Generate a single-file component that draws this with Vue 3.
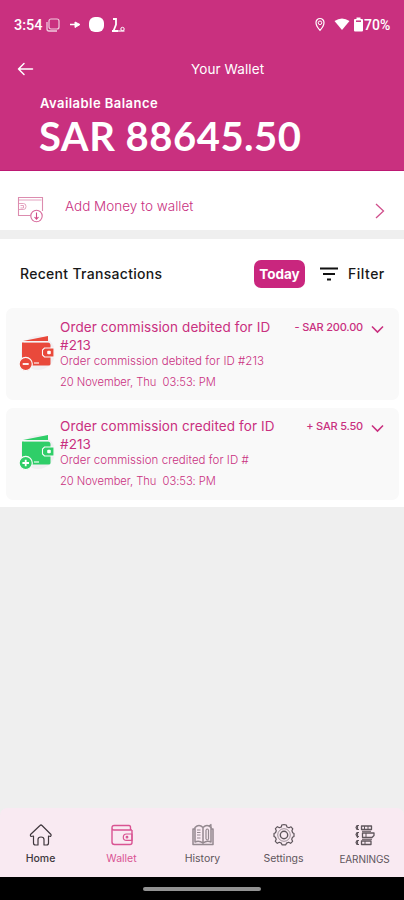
<script setup>
const transactions = [
  { id: 1, kind: 'debit', title: 'Order commission debited for ID #213', note: 'Order commission debited for ID #213', date: '20 November, Thu\u00a0 03:53: PM', amount: '- SAR 200.00' },
  { id: 2, kind: 'credit', title: 'Order commission credited for ID #213', note: 'Order commission credited for ID #', date: '20 November, Thu\u00a0 03:53: PM', amount: '+ SAR 5.50' },
]
const tabs = [
  { name: 'Home', icon: 'home' },
  { name: 'Wallet', icon: 'wallet' },
  { name: 'History', icon: 'history' },
  { name: 'Settings', icon: 'settings' },
  { name: 'EARNINGS', icon: 'earnings' },
]
</script>

<template>
  <div class="screen">
    <header class="hero">
      <div class="status">
        <span class="clock">3:54</span>
        <svg class="status-left" width="82" height="18" viewBox="0 0 82 18" fill="none" stroke="#fff">
          <g opacity=".75"><rect x="4" y="3" width="10" height="10" rx="2" stroke-width="1.2" /><path d="M2 6v7q0 2 2 2h8" stroke-width="1.3" /></g>
          <path d="M25 8.500h7" stroke-width="1.5" /><path d="M30 6l5 2.500-5 3z" fill="#fff" stroke-width="1" />
          <rect x="44" y="1" width="15" height="15" rx="6" fill="#fff" stroke="none" />
          <path d="M68 3h3v5.500L68.500 15M67 15h6" stroke-width="1.800" /><path d="M73 15h6.500" stroke-width="1.200" /><circle cx="77.500" cy="13" r="1.700" />
        </svg>
        <svg class="status-right" width="49" height="18" viewBox="0 0 49 18">
          <path d="M5 2.500a4 4 0 0 0-4 4.200C1 9.800 5 14.300 5 14.300s4-4.500 4-7.600A4 4 0 0 0 5 2.500z" fill="none" stroke="#fff" stroke-width="1.200" /><circle cx="5" cy="6.800" r="1.800" fill="none" stroke="#fff" />
          <path d="M19.500 5q7.500-5 15 0L27 14z" fill="#fff" />
          <path d="M41.500 1.500h4v1.500h1.500a1 1 0 0 1 1 1v10.500a1 1 0 0 1-1 1h-7a1 1 0 0 1-1-1V4a1 1 0 0 1 1-1h1.500z" fill="#fff" /><path d="M41 5.200h5" stroke="#c9307f" stroke-width="1.500" />
        </svg>
        <span class="battery">70%</span>
      </div>
      <div class="titlebar">
        <svg width="18" height="14" viewBox="0 0 18 14" fill="none" stroke="#fff" stroke-width="1.500" stroke-linecap="round" stroke-linejoin="round"><path d="M15.500 7H1.500M7 1.500L1.500 7 7 12.500" /></svg>
        <h1>Your Wallet</h1>
      </div>
      <p class="balance-label">Available Balance</p>
      <p class="balance">SAR 88645.50</p>
    </header>

    <section class="add-money">
      <svg width="28" height="28" viewBox="0 0 28 28" fill="none" stroke="#dc8caf" stroke-width="1.100">
        <path d="M13.500 19.500H1.500V1.500H25.500V15" /><path d="M1.500 4h23M1.500 7.500h5q2.500 0 2.500 3t-2.500 3h-5M3.500 9.500h3v2.500h-3" stroke-width=".8" />
        <circle cx="19.500" cy="20" r="5.700" stroke="#d86a9c" /><path d="M19.500 16.500v6.500M17.500 21l2 2.200 2-2.200" stroke="#d04a88" />
      </svg>
      <span class="add-label">Add Money to wallet</span>
      <svg class="chevron" width="10" height="16" viewBox="0 0 10 16" fill="none" stroke="#d04f8c" stroke-width="1.300"><path d="M1 1l7.500 7L1 15" /></svg>
    </section>

    <section class="recent">
      <div class="recent-head">
        <h2>Recent Transactions</h2>
        <button class="today">Today</button>
        <svg width="18" height="14" viewBox="0 0 18 14" stroke="#111" stroke-width="1.800"><path d="M0 1.500h18M3 7h12M7 12.500h4" /></svg>
        <span class="filter">Filter</span>
      </div>

      <article v-for="item in transactions" :key="item.id" class="card" :class="item.kind">
        <svg class="purse" width="36" height="40" viewBox="0 0 36 40">
          <circle cx="19" cy="20" r="17" fill="#f1eff2" />
          <path d="M4 8L29 3v5z" class="solid" />
          <path d="M3 9.500h25.500q3 0 3 3V31q0 1.500-2 1.500H3z" class="solid" />
          <path d="M5 8.800h24" stroke="#fafafa" stroke-width=".8" />
          <path d="M25.500 15h9.500v9h-9.500l-2-2v-5z" class="solid" stroke="#fafafa" stroke-width="1.100" />
          <rect x="28.200" y="17.700" width="3.600" height="3.600" rx="1" fill="#fff" />
          <path d="M15 30h5" stroke="#fff" stroke-width="1.100" />
          <circle cx="6.700" cy="31" r="6.600" class="solid" stroke="#fafafa" stroke-width="1.200" />
          <path :d="item.kind === 'credit' ? 'M3.400 31h6.600M6.700 27.700v6.600' : 'M3.700 31h6'" stroke="#fff" stroke-width="1.800" />
        </svg>
        <div class="details">
          <h3>{{ item.title }}</h3>
          <p class="note">{{ item.note }}</p>
          <p class="date">{{ item.date }}</p>
        </div>
        <span class="amount">{{ item.amount }}</span>
        <svg class="down" width="13" height="9" viewBox="0 0 13 9" fill="none" stroke="#c9307f" stroke-width="1.600"><path d="M1 1.500l5.500 5.500L12 1.500" /></svg>
      </article>
    </section>

    <nav class="tabs">
      <div v-for="tab in tabs" :key="tab.name" class="tab" :class="tab.icon">
        <svg width="24" height="24" viewBox="0 0 24 24" fill="none" stroke="currentColor" stroke-width="1.200" stroke-linejoin="round">
          <template v-if="tab.icon === 'home'">
            <path d="M4.500 13v7q0 2 2 2H9v-5.500q0-2.500 3-2.500t3 2.500V22h2.500q2 0 2-2v-7l2 .5q1-1 .5-2L13 2.500q-1-1-2 0L1.500 11.500q-.5 1 .5 2z" />
          </template>
          <template v-else-if="tab.icon === 'wallet'">
            <path d="M22 7H4Q2 7 2 4.800 2 2.500 4.300 2.500H19q1.500 0 1.500 2V7M2 5v14q0 2.500 2.500 2.500H20q2 0 2-2V7" stroke-width="1.400" /><path d="M22 11h-5.500a3.200 3.200 0 0 0 0 6.400H22z" /><circle cx="17" cy="14.200" r=".8" />
          </template>
          <template v-else-if="tab.icon === 'history'">
            <path d="M4 6H2v15.500h20V6h-2M4 19V4.500q4-4 8 0 4-4 8 0V19q-4-2-8 1-4-3-8-1zM12 4v16" stroke-width="1.500" /><path d="M6 7h3.500M6 9.500h3.500M6 12h3.500M6 15h3.500M15 7v9M17.500 7v9M15 7q1.300-2 2.500 0M15 16q1.300 2 2.500 0M18 3l2-1.500V5" />
          </template>
          <template v-else-if="tab.icon === 'settings'">
            <path d="M9.700 2q2.300-.9 4.600 0l.7 2 2 .8 2-1 1.800 2-.9 2 .8 2L22 10.500v3l-1.500.8-.8 2 .9 2-2 2-2-1-2 .8-.8 1.700H10l-.7-1.700-2-.8-2 1-2-2 .9-2-.8-2L2 13.500v-3l1.500-.8.8-2-.9-2 2-2 2 1 2-.8z" /><circle cx="12" cy="12" r="6.300" stroke-width=".6" /><circle cx="12" cy="12" r="3.700" stroke-width="1.400" />
          </template>
          <template v-else>
            <path d="M8.500 3h10v3.500h-10zM9.500 10h11.500v2.500l-2 2H9.500zM8.500 18h9.500v3.500H8.500z" stroke-width="1.300" /><path d="M11.500 3v3M15 3v3M13 10v4M12 18v3M9 8.300h9M9 16.300h10" stroke-width="1" /><path d="M6 2.500H4L3 4.500l1 2h2M6 9.500H4l-1 2 1 2h2M6 17.500H4l-1 2 1 2h2M4.500 3v4M4.500 10v5M4.500 18v3" stroke-width="1.200" />
          </template>
        </svg>
        <span>{{ tab.name }}</span>
      </div>
    </nav>
    <div class="gesture"><i></i></div>
  </div>
</template>

<style>
body { margin: 0; }
</style>

<style scoped>
.screen { width: 404px; height: 900px; display: flex; flex-direction: column; background: #efefef; font-family: Inter, "Open Sans", sans-serif; color: #c9307f; overflow: hidden; }
h1, h2, h3, p { margin: 0; }
svg { flex: none; display: block; }
span, p, h1, h2 { white-space: nowrap; }
.hero { box-sizing: border-box; height: 171px; flex: none; background: #c9307f; border-bottom: 1px solid #bd1873; color: #fff; }
.status { height: 34px; padding: 16px 12px 0 14px; box-sizing: border-box; display: flex; align-items: center; font-family: Roboto, sans-serif; font-weight: 500; font-size: 14.500px; }
.clock { width: 31px; }
.status-right { margin-left: auto; }
.battery { width: 28px; font-size: 14px; letter-spacing: .1px; }
.titlebar { height: 58px; display: flex; align-items: center; padding: 11px 0 0 17px; box-sizing: border-box; }
.titlebar h1 { margin-left: 156px; font-size: 13.500px; font-weight: 400; letter-spacing: .1px; }
.balance-label { margin: 1px 0 0 40px; height: 20px; line-height: 20px; font-size: 13px; font-weight: 600; letter-spacing: .45px; }
.balance { margin-left: 39px; height: 46px; line-height: 46px; font-family: Lato, sans-serif; font-size: 40px; font-weight: 700; letter-spacing: .5px; }
.add-money { height: 59px; flex: none; background: #fff; display: flex; align-items: center; padding: 17px 19px 0 17px; box-sizing: border-box; }
.add-label { margin: -6px 0 0 20px; font-size: 13.500px; font-weight: 300; }
.add-money svg:first-child { margin-top: 1px; }
.add-money .chevron { margin: 3px 0 0 auto; }
.recent { margin-top: 9px; height: 268px; flex: none; background: #fff; }
.recent-head { height: 69px; display: flex; align-items: center; padding: 0 0 0 20px; color: #181818; box-sizing: border-box; }
.recent-head h2 { font-size: 14px; font-weight: 500; width: 234px; letter-spacing: .3px; }
.today { width: 51px; height: 28px; padding: 0; border: 0; border-radius: 7px; background: #c9267e; color: #fff; font: 700 13.500px Inter, sans-serif; margin-right: 15px; }
.filter { margin-left: 10px; font-size: 14px; font-weight: 500; letter-spacing: .5px; }
.card { position: relative; box-sizing: border-box; height: 92px; margin: 0 5px 8px 6px; border-radius: 7px; background: #f9f9f9; display: flex; }
.purse { margin: 25px 5px 0 13px; }
.details { width: 226px; padding-top: 11px; }
.card h3 { font-size: 13.500px; line-height: 17.500px; font-weight: 400; letter-spacing: .1px; }
.note { font-size: 11.500px; line-height: 15px; font-weight: 300; letter-spacing: .04px; }
.date { font-size: 11.200px; line-height: 16px; font-weight: 300; margin-top: 5px; letter-spacing: -.05px; }
.credit .details { padding-top: 10px; }
.amount { position: absolute; right: 36px; top: 11px; font-size: 11px; line-height: 16px; font-weight: 500; letter-spacing: -.2px; }
.credit .amount { top: 10px; }
.down { position: absolute; right: 15px; top: 17px; }
.debit .solid { fill: #e9493b; }
.credit .solid { fill: #2fce68; }
.credit .purse, .credit .down { margin-top: -1px; }
.credit .purse { margin-top: 24px; }
.tabs { margin-top: auto; height: 69px; flex: none; background: #f9eaf2; display: grid; grid-template-columns: repeat(5, 81px); border-radius: 7px 7px 0 0; }
.tab { display: flex; flex-direction: column; align-items: center; padding-top: 15px; font-size: 10.500px; color: #5f565c; font-weight: 400; }
.tab span { margin-top: 4px; line-height: 16px; }
.home { color: #40383e; }
.home span { font-weight: 500; }
.wallet { color: #d95392; }
.earnings span { font-size: 10px; letter-spacing: -.1px; }
.history svg { opacity: .65; }
.gesture { height: 23px; flex: none; background: #000; display: flex; justify-content: center; align-items: center; }
.gesture i { width: 118px; height: 4px; border-radius: 2px; background: #929292; }
</style>
